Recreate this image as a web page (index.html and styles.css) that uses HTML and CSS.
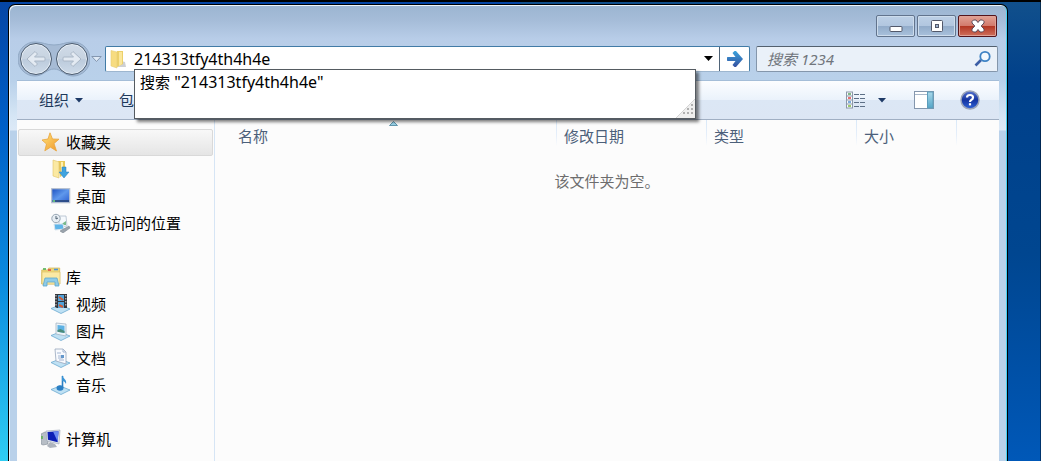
FILE: index.html
```html
<!DOCTYPE html>
<html lang="zh-CN">
<head>
<meta charset="utf-8">
<title>1234</title>
<link rel="stylesheet" href="styles.css">
</head>
<body>
<div class="window">
  <header class="titlebar">
    <button class="caption minimize" type="button" aria-label="最小化"><svg width="14" height="8" viewBox="0 0 14 8"><rect x="1" y="1.5" width="12" height="5" rx="1" fill="#fff" stroke="#52586a"/></svg></button>
    <button class="caption" type="button" aria-label="最大化"><svg width="14" height="14" viewBox="0 0 14 14"><rect x="1.5" y="1.5" width="11" height="11" rx="1" fill="#fff" stroke="#52586a"/><rect x="5.5" y="5.5" width="3" height="3" fill="#9fb5d0" stroke="#52586a"/></svg></button>
    <button class="caption close" type="button" aria-label="关闭"><svg width="14" height="14" viewBox="0 0 14 14"><path d="M1 2.500 2.500 1H5L7 3.500 9 1h2.500L13 2.500V4l-2.800 3L13 10v1.500L11.500 13H9L7 10.500 5 13H2.500L1 11.500V10l2.800-3L1 4Z" fill="#fff" stroke="#5b4a58"/></svg></button>
  </header>

  <div class="navbar">
    <div class="history">
      <svg class="history-base" width="72" height="36" viewBox="0 0 72 36"><path d="M17 1C25 1 28 4 36 4S47 1 55 1A17 17 0 0 1 55 35C47 35 43 28 36 28S25 35 17 35A17 17 0 0 1 17 1Z" fill="#a6bbd5" stroke="#90a8c4"/></svg>
      <button class="round" type="button" aria-label="后退"><svg width="20" height="18" viewBox="0 0 20 18"><path d="M1 9 9 1.500 11.500 4 8.500 7H18q1 0 1 1v2q0 1-1 1H8.500l3 3L9 16.500Z" fill="#e3eaf2" stroke="#aab7c6"/></svg></button>
      <button class="round" type="button" aria-label="前进"><svg width="20" height="18" viewBox="0 0 20 18"><path d="M19 9 11 1.500 8.500 4l3 3H2Q1 7 1 8v2q0 1 1 1h9.500l-3 3 2.500 2.500Z" fill="#e3eaf2" stroke="#aab7c6"/></svg></button>
    </div>
    <button class="recent" type="button" aria-label="最近页面"><svg width="11" height="8" viewBox="0 0 11 8"><path d="M.8 1.500h9.400L5.500 6.500Z" fill="#dfeaf6" stroke="#8497b0"/></svg></button>
    <div class="address">
      <svg class="address-icon" width="20" height="20" viewBox="0 0 20 20"><path d="M9 18h9l-1-5-4-1Z" fill="#b9bcc0" opacity=".7"/><path d="M9 2h6v13l-6 3Z" fill="#ecd06a"/><path d="M3 1.500 9 3v16l-6-2Z" fill="#f7dc80" stroke="#e6cd77" stroke-width=".6"/><path d="M11 3h3v12l-3 2Z" fill="#fbe79b"/></svg>
      <input class="address-input" type="text" aria-label="地址" value="214313tfy4th4h4e">
      <button class="address-drop" type="button" aria-label="以前的位置"><svg width="9" height="5" viewBox="0 0 9 5"><path d="M0 0h9L4.500 5Z" fill="#000"/></svg></button>
      <button class="go" type="button" aria-label="转到"><svg width="18" height="18" viewBox="0 0 18 18"><defs><linearGradient id="gogr" x1="0" y1="0" x2="0" y2="1"><stop offset="0" stop-color="#3ba3dc"/><stop offset="1" stop-color="#3450a0"/></linearGradient></defs><path d="M1.500 7H9.500L6.500 3 8.500 1H10L17 9l-7 8H8.500l-2-2 3-4h-8Q1 11 1 10V8Q1 7 1.500 7Z" fill="url(#gogr)"/></svg></button>
      <div class="suggest">
        <a class="suggest-item" href="#"><span class="cjk">搜索</span> "214313tfy4th4h4e"</a>
        <svg class="grip" width="21" height="19" viewBox="0 0 21 19"><path d="M21 0v19H2Z" fill="#efefef"/><path d="M2 19 21 0" stroke="#d4d4d4"/><path d="M17 5h2v2h-2zM13 9h2v2h-2zM17 9h2v2h-2zM9 13h2v2H9zM13 13h2v2h-2zM17 13h2v2h-2z" fill="#b0b0b0"/></svg>
      </div>
    </div>
    <label class="search">
      <input class="search-input" type="search" aria-label="搜索 1234" placeholder="搜索 1234">
      <svg width="18" height="18" viewBox="0 0 18 18"><path d="M7 10 1.500 15.500" stroke="#3b5ea6" stroke-width="2.600"/><circle cx="11" cy="6.500" r="4.700" fill="#f3f9fe" stroke="#3d82c4" stroke-width="1.800"/></svg>
    </label>
  </div>

  <div class="client">
    <div class="toolbar">
      <button class="tool" type="button">组织<svg width="8" height="5" viewBox="0 0 8 5"><path d="M0 0h8L4 4.500Z" fill="#1e3a66"/></svg></button>
      <button class="tool" type="button">包含</button>
      <div class="spacer"></div>
      <button class="tool-icon" type="button" aria-label="视图"><svg width="20" height="18" viewBox="0 0 20 18"><rect x=".5" y="1" width="6" height="16" fill="#fafcff" stroke="#8c98a8"/><path d="M0 5h7M0 9h7M0 13h7" stroke="#8c98a8"/><path d="M2 3h3" stroke="#5aa05a" stroke-width="1.500"/><path d="M2 7h3" stroke="#e04040" stroke-width="1.500"/><path d="M2 11h3" stroke="#4f91d0" stroke-width="1.500"/><path d="M2 15h3" stroke="#7db83a" stroke-width="1.500"/><path d="M8 3.500h5m1 0h5M8 7.500h5m1 0h5M8 11.500h5m1 0h5M8 15.500h5m1 0h5" stroke="#5d6f86"/></svg></button>
      <button class="tool-icon view-drop" type="button" aria-label="更多选项"><svg width="8" height="5" viewBox="0 0 8 5"><path d="M0 0h8L4 4.500Z" fill="#1e3a66"/></svg></button>
      <button class="tool-icon pane" type="button" aria-label="显示预览窗格"><svg width="20" height="18" viewBox="0 0 20 18"><defs><linearGradient id="pane" x1="0" y1="0" x2="0" y2="1"><stop offset="0" stop-color="#a9d8ea"/><stop offset="1" stop-color="#55a6c8"/></linearGradient></defs><rect x=".5" y=".5" width="19" height="17" fill="#fff" stroke="#8496ad"/><path d="M1 3.500h13" stroke="#a9b8ca"/><rect x="13.500" y="1" width="5.500" height="16" fill="url(#pane)" stroke="#5d9dbb"/></svg></button>
      <button class="tool-icon" type="button" aria-label="获取帮助"><svg width="20" height="20" viewBox="0 0 20 20"><defs><linearGradient id="help" x1="0" y1="0" x2="0" y2="1"><stop offset="0" stop-color="#5674cf"/><stop offset=".5" stop-color="#1534a0"/><stop offset="1" stop-color="#2f63d8"/></linearGradient></defs><circle cx="10" cy="10" r="9" fill="url(#help)" stroke="#9aa3b8" stroke-width="1.500"/><path d="M7 7.500Q7 5 10 5T13 7.500Q13 9 11.500 9.700 10 10.500 10 12" fill="none" stroke="#fff" stroke-width="2.200"/><rect x="8.900" y="13.200" width="2.200" height="2.200" fill="#fff"/></svg></button>
    </div>

    <div class="body">
      <nav class="sidebar">
        <ul class="group">
          <li><a class="item head selected" href="#"><svg width="20" height="20" viewBox="0 0 20 20"><defs><linearGradient id="star" x1="0" y1="0" x2="1" y2="1"><stop offset="0" stop-color="#ffe57a"/><stop offset="1" stop-color="#f0952a"/></linearGradient></defs><path d="M9 .8 11.500 7 18 7.200 13 11.500 15.500 19 9.500 15.200 3.800 18.800 5.500 12 1 8 7 7Z" fill="url(#star)" stroke="#e8a53c" stroke-width=".8"/></svg>收藏夹</a></li>
          <li><a class="item" href="#"><svg width="20" height="20" viewBox="0 0 20 20"><path d="M7 2h7v13l-5 3Z" fill="#e9c95b"/><path d="M2 1 8 3v16l-6-2Z" fill="#fbe9a2" stroke="#dfc36a" stroke-width=".6"/><path d="M10 3h2v12l-2 2Z" fill="#fff0b0"/><path d="M11 8h4v5h3l-5 6-5-6h3Z" fill="#3fa3df" stroke="#2a7cb8" stroke-width=".5"/></svg>下载</a></li>
          <li><a class="item" href="#"><svg width="20" height="20" viewBox="0 0 20 20"><defs><linearGradient id="desk" x1="0" y1="0" x2="1" y2="1"><stop offset="0" stop-color="#1b4fc0"/><stop offset=".5" stop-color="#5f98ec"/><stop offset="1" stop-color="#2a5cd0"/></linearGradient></defs><rect x=".7" y="2.700" width="18" height="14" fill="url(#desk)" stroke="#b6bfce" stroke-width="1.200"/><path d="M1.500 15h16.500" stroke="#27406f" stroke-width="1.500"/><path d="M2 15h2" stroke="#6fe07a" stroke-width="1.500"/></svg>桌面</a></li>
          <li><a class="item" href="#"><svg width="20" height="20" viewBox="0 0 20 20"><path d="M8 3h7l1 10-8 1Z" fill="#f5f9fd" stroke="#aebccb" stroke-width=".8"/><path d="M9 12h6V8l-3 2Z" fill="#79b98c"/><path d="M3 11h9l1 5-9 1Z" fill="#5fb4e8" stroke="#d8e4ee"/><path d="m9 18 9-5 1 2-7 5Z" fill="#9aa3ac" stroke="#727c86" stroke-width=".5"/><circle cx="5" cy="5.500" r="4.200" fill="#e6edf3" stroke="#99a7b4"/><path d="M5 3v3l2-1" stroke="#516273" fill="none"/></svg>最近访问的位置</a></li>
        </ul>
        <ul class="group">
          <li><a class="item head" href="#"><svg width="20" height="20" viewBox="0 0 20 20"><path d="M.7 3h6l1-2h11v16H.7Z" fill="#efd77b" stroke="#d2b450" stroke-width=".7"/><path d="M1 5h18v12H1Z" fill="#fbe9a4" stroke="#d9bd60" stroke-width=".6"/><path d="M2 2h3" stroke="#50b050" stroke-width="1.600"/><path d="M7 3h3" stroke="#e04a40" stroke-width="1.600"/><path d="M13 2.500h4" stroke="#4c96d8" stroke-width="1.600"/><path d="M4 11h12l2 8h-4v-4H6v4H2Z" fill="#8ecbe8" stroke="#5da7cc" stroke-width=".8"/></svg>库</a></li>
          <li><a class="item" href="#"><svg width="20" height="20" viewBox="0 0 20 20"><path class="tray" d="M0 14.500 9 11l10 4-9 4.500Z"/><path d="M4 0h12v14H6l-2-1Z" fill="#34363c"/><path d="M7 1h6v6H7zM7 8h6v6H7z" fill="#4fa3dc"/><path d="m8 3 4 3M8 11l4 2" stroke="#d35b32" stroke-width="2"/><path d="M5 1v12M14.800 1v12" stroke="#ddd" stroke-dasharray="1.500 1.500"/></svg>视频</a></li>
          <li><a class="item" href="#"><svg width="20" height="20" viewBox="0 0 20 20"><path class="tray" d="M0 14.500 9 11l10 4-9 4.500Z"/><path d="m5 2 10 1v12L5 13Z" fill="#edf4f9" stroke="#a5b5c4" stroke-width=".8"/><path d="m6.500 4 7 .7V12l-7-1.200Z" fill="#5db1e4"/><path d="m6.500 9 3-1 4 2v2l-7-1.200Z" fill="#4b8c79"/></svg>图片</a></li>
          <li><a class="item" href="#"><svg width="20" height="20" viewBox="0 0 20 20"><path class="tray" d="M0 14.500 9 11l10 4-9 4.500Z"/><path d="M4 1h8l3 3v12L5 13Z" fill="#f8fafe" stroke="#98a7bd" stroke-width=".8"/><path d="M12 1v3h3M6 5h4M7 8h5M7 10h5M8 12h5" stroke="#a3b6d2" fill="none"/><path d="M10 7h3v3h-3Z" fill="#6397cb"/></svg>文档</a></li>
          <li><a class="item" href="#"><svg width="20" height="20" viewBox="0 0 20 20"><path class="tray" d="M0 14.500 9 11l10 4-9 4.500Z"/><path d="M11.500 1v12" stroke="#2b7fc4" stroke-width="1.600"/><path d="M11 0c1 4 5 4 4 9-1-2-2-3-4-3Z" fill="#3c95d6"/><ellipse cx="9" cy="13" rx="3.500" ry="2.800" fill="#2b7fc4"/></svg>音乐</a></li>
        </ul>
        <ul class="group">
          <li><a class="item head" href="#"><svg width="20" height="20" viewBox="0 0 20 20"><path d="m0 5 4-2 3 1v11l-5 1-2-1Z" fill="#b7bec6" stroke="#7f8994" stroke-width=".6"/><path d="M1 7v3" stroke="#56b04e" stroke-width="1.500"/><path d="m9 13 5 2 2 3-7 1-3-2Z" fill="#aeb4bd"/><path d="m5 2 14-1-1 14-12-3Z" fill="#dfe4ec" stroke="#98a2b2" stroke-width=".6"/><path d="m6.500 3 11-.8-.8 11-9.700-2.500Z" fill="#0d1fb5"/><path d="m12 2.600 5.500-.4-.8 10.500Z" fill="#6c8cf0"/></svg>计算机</a></li>
        </ul>
      </nav>

      <main class="files">
        <svg class="sort" width="9" height="5" viewBox="0 0 9 5"><path d="M.5 4.500 4.500.5l4 4Z" fill="#9ad3ea" stroke="#47819b" stroke-width=".8"/></svg>
        <table class="list">
          <colgroup><col class="col-name"><col class="col-date"><col class="col-type"><col class="col-size"><col></colgroup>
          <thead><tr><th>名称</th><th>修改日期</th><th>类型</th><th>大小</th><td></td></tr></thead>
          <tbody><tr><td class="empty" colspan="5">该文件夹为空。</td></tr></tbody>
        </table>
      </main>
    </div>
  </div>
</div>
</body>
</html>
```
FILE: styles.css
```css
* { box-sizing: border-box; }

html { height: 100%; }

body {
  margin: 0;
  min-height: 100%;
  display: flex;
  border-top: 2px solid #000;
  padding: 2px 33px 0 8px;
  overflow: hidden;
  background:
    linear-gradient(#0545a5, #0060c8 28%, #0a8ade 60%, #2fcdf3) left / 50% 100% no-repeat,
    linear-gradient(#11508c, #00408a 18%, #004690 55%, #0058b8) right / 60% 100% no-repeat #000;
  color: #000;
  font: 15px/20px "Noto Sans", "Noto Sans CJK SC", sans-serif;
}

button, input { font: inherit; color: inherit; }
button { padding: 0; border: 0; background: none; display: flex; align-items: center; justify-content: center; }
svg { display: block; flex: none; }
a { color: inherit; text-decoration: none; }

.window {
  flex: 1;
  min-width: 0;
  display: flex;
  flex-direction: column;
  border: 1px solid #000;
  border-bottom: 0;
  border-radius: 7px 7px 0 0;
  padding: 0 8px;
  background: linear-gradient(#9bb5d1, #a6bdd9 16px, #b8cde8 34px, #b9d1ea 76px, #d6e6f5 112px, #dce9f7 125px, #b9d1ea 126px);
  box-shadow: inset 1px 1px #eef6fc, inset -1px 0 #46d2f4;
}

.titlebar { display: flex; justify-content: flex-end; gap: 2px; padding: 10px 2px 0 0; }

.caption {
  width: 39px;
  height: 22px;
  border: 1px solid #62748d;
  border-radius: 2px;
  box-shadow: inset 0 0 0 1px #cddcec;
  background: linear-gradient(#bdd0e6, #b1c6df 50%, #91abc9 50%, #a9c1dc);
}
.minimize { padding-top: 6px; }
.close {
  border-color: #54141b;
  box-shadow: inset 0 0 0 1px #dea196;
  background: linear-gradient(#e2a295, #d2796b 50%, #b23421 50%, #cf705c);
}

.navbar { display: flex; align-items: center; height: 43px; padding-right: 1px; }

.history { position: relative; display: flex; gap: 4px; padding: 0 1px 0 3px; }
.history-base { position: absolute; left: 1px; top: -2px; }
.round {
  position: relative;
  width: 32px;
  height: 32px;
  border: 1px solid #4d5d70;
  border-radius: 50%;
  background: linear-gradient(#d0dbe8, #c7d3e0 50%, #bccbdc 52%, #cedbe9);
  box-shadow: inset 0 0 0 1px #e9f0f7;
}
.recent { width: 15px; height: 20px; }

.address {
  position: relative;
  flex: 1;
  min-width: 0;
  height: 26px;
  display: flex;
  align-items: center;
  margin: 0 6px 0 1px;
  border: 1px solid #417ba6;
  border-bottom-color: #9db6cf;
  border-radius: 2px;
  background: #fff;
}
.address-icon { margin: 0 3px 0 2px; }
.address-input { flex: 1; min-width: 0; height: 24px; padding: 0 3px; border: 0; background: none; outline: 0; font-size: 16px; }
.address-drop { width: 21px; height: 24px; }
.go { width: 30px; height: 24px; border-left: 1px solid #4f6377; }

.suggest {
  position: absolute;
  z-index: 1;
  top: 22px;
  left: 28px;
  right: 53px;
  height: 50px;
  border: 1px solid #555b61;
  background: #fff;
  box-shadow: 3px 3px 3px rgba(0, 0, 0, .5);
}
.suggest-item { display: block; padding: 2px 5px; font-size: 16px; }
.cjk { font-size: 15px; }
.grip { position: absolute; right: 0; bottom: 0; }

.search {
  width: 242px;
  height: 26px;
  display: flex;
  align-items: center;
  padding: 0 5px 0 10px;
  border: 1px solid #8496ab;
  border-top-color: #53606e;
  border-radius: 2px;
  background: #eaf1f9;
}
.search-input { flex: 1; min-width: 0; padding: 0; border: 0; background: none; outline: 0; font-style: italic; }
.search-input::placeholder { color: #70757c; opacity: 1; }

.client { flex: 1; display: flex; flex-direction: column; border-top: 1px solid #a4bdd8; background: #fcfcfc; }

.toolbar {
  height: 39px;
  display: flex;
  align-items: center;
  padding: 0 19px 0 22px;
  border-bottom: 1px solid #a0afc3;
  background: linear-gradient(#fcfdff, #eaf2fb 50%, #dce7f5 50%, #dce6f4);
  color: #1e395b;
}
.tool { gap: 6px; margin-right: 36px; }
.spacer { flex: 1; }
.view-drop { margin: 0 28px 0 12px; }
.pane { margin-right: 26px; }

.body { flex: 1; display: flex; }

.sidebar { width: 198px; flex: none; padding: 9px 1px 0; border-right: 1px solid #d6e5f5; }
.group { list-style: none; margin: 0 0 27px; padding: 0; }
.item { display: flex; align-items: center; gap: 5px; height: 27px; padding: 0 0 2px 33px; }
.head { padding-left: 23px; }
.selected { border: 1px solid #d9d9d9; border-radius: 2px; background: linear-gradient(#f8f8f8, #e5e5e5); padding-left: 22px; }
.tray { fill: #bfe1f4; stroke: #6ba9d0; stroke-width: .8px; }

.files { position: relative; flex: 1; min-width: 0; }
.sort { position: absolute; top: 1px; left: 174px; }
.list { width: 100%; table-layout: fixed; border-collapse: collapse; }
.col-name { width: 342px; }
.col-date, .col-type { width: 150px; }
.col-size { width: 100px; }
.list th {
  height: 32px;
  padding: 0 0 0 7px;
  text-align: left;
  font-weight: normal;
  color: #4c607a;
  background: linear-gradient(#d9e8f8, #e6effa 60%, #fcfcfc) right top / 1px 26px no-repeat;
}
.list th:first-child { padding-left: 23px; }
.empty { height: 58px; padding: 0; text-align: center; color: #6d6d6d; }
```
